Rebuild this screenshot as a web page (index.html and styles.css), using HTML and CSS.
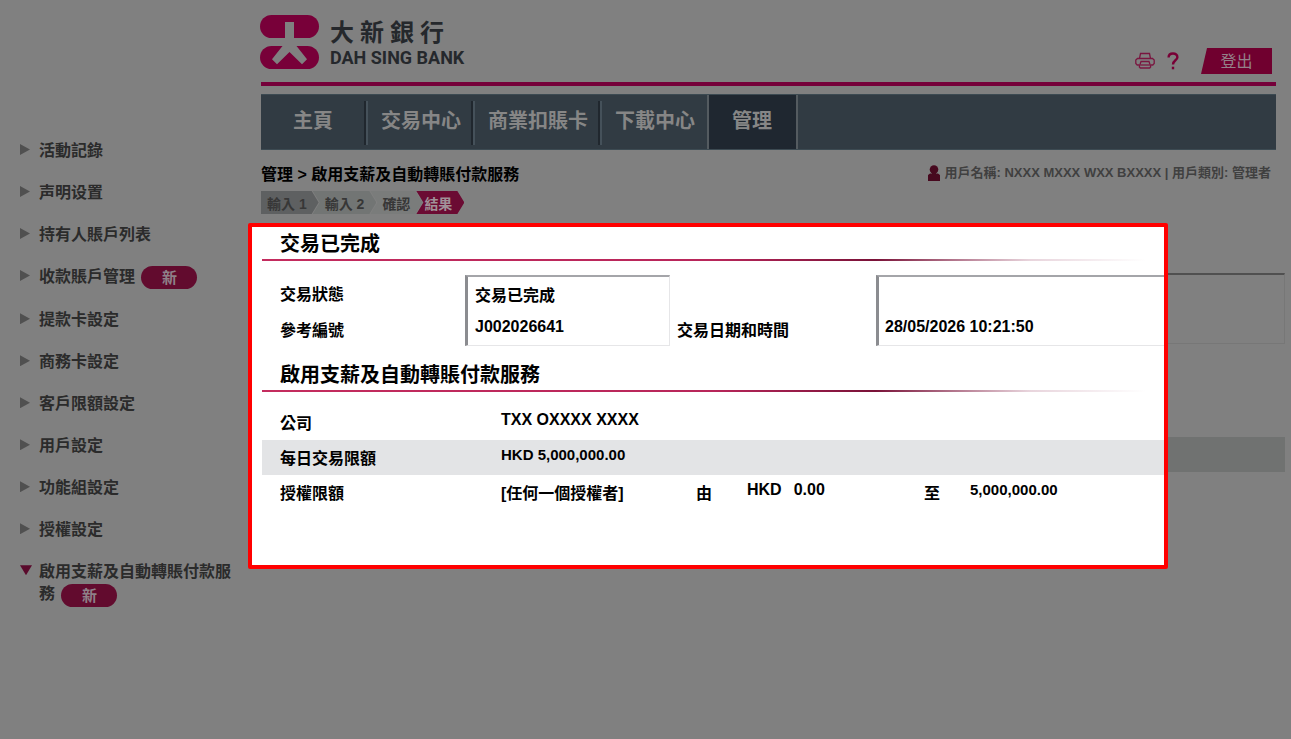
FILE: index.html
```html
<!DOCTYPE html>
<html lang="zh-Hant">
<head>
<meta charset="utf-8">
<meta name="viewport" content="width=device-width, initial-scale=1">
<title>大新銀行 DAH SING BANK</title>
<link rel="stylesheet" href="styles.css">
</head>
<body>
<div class="page">
  <aside class="sidebar">
    <ul class="side-list">
      <li class="side-item"><a href="#">活動記錄</a></li>
      <li class="side-item"><a href="#">声明设置</a></li>
      <li class="side-item"><a href="#">持有人賬戶列表</a></li>
      <li class="side-item"><a href="#">收款賬戶管理</a> <span class="pill">新</span></li>
      <li class="side-item"><a href="#">提款卡設定</a></li>
      <li class="side-item"><a href="#">商務卡設定</a></li>
      <li class="side-item"><a href="#">客戶限額設定</a></li>
      <li class="side-item"><a href="#">用戶設定</a></li>
      <li class="side-item"><a href="#">功能組設定</a></li>
      <li class="side-item"><a href="#">授權設定</a></li>
      <li class="side-item side-item-open"><a href="#">啟用支薪及自動轉賬付款服務</a> <span class="pill">新</span></li>
    </ul>
  </aside>

  <div class="main">
    <header class="header">
      <a class="brand" href="#">
        <svg class="brand-mark" width="60" height="55" viewBox="0 0 60 55" aria-hidden="true">
          <rect x="0" y="0" width="59" height="23" rx="11.5" fill="#780039"/>
          <rect x="0" y="31" width="59" height="23" rx="11.5" fill="#780039"/>
          <path d="M25 7h9v24h2.500l10.500 13.300-5 4.900-12.500-12.300-12.500 12.300-5-4.900L22.500 31H25z" fill="#808080"/>
        </svg>
        <span class="brand-names">
          <span class="brand-zh"><span>大</span><span>新</span><span>銀</span><span>行</span></span>
          <span class="brand-en">DAH SING BANK</span>
        </span>
      </a>
      <div class="tools">
        <button class="icon-button" type="button" aria-label="列印">
          <svg width="20" height="18" viewBox="0 0 20 18" fill="none" stroke="#7a1640" stroke-width="1.300" aria-hidden="true">
            <path d="M4.500 6.500 5.500 1.500h9l1 5"/>
            <path d="M4.500 13H2.200L.8 11.500V8l1.700-1.500h15L19.200 8v3.500L17.800 13h-2.300"/>
            <path d="M6 9.500h8l1.700 5.300-1 1.200H5.300l-1-1.200z"/>
            <path d="M5.500 13h9"/>
          </svg>
        </button>
        <button class="icon-button help" type="button" aria-label="說明">
          <svg width="12" height="18" viewBox="0 0 12 18" fill="none" stroke="#780036" stroke-width="2.400" aria-hidden="true">
            <path d="M1.600 5.500C1.600 2.800 3.400 1.500 6 1.500s4.400 1.400 4.400 3.700C10.400 8.300 6 8.400 6 12.500"/>
            <path d="M6 14.700v2.600"/>
          </svg>
        </button>
        <button class="logout" type="button">登出</button>
      </div>
    </header>

    <nav class="nav">
      <a class="nav-home" href="#">主頁</a>
      <a href="#">交易中心</a>
      <a href="#">商業扣賬卡</a>
      <a href="#">下載中心</a>
      <a class="nav-active" href="#">管理</a>
    </nav>

    <div class="context">
      <div class="crumbs">管理 &gt; 啟用支薪及自動轉賬付款服務</div>
      <div class="user">
        <svg width="14" height="16" viewBox="0 0 14 16" fill="#47091f" aria-hidden="true">
          <circle cx="7" cy="4.500" r="4.300"/>
          <path d="M5 7h4v1.500h2L13 10v6H1v-6l2-1.500h2z"/>
        </svg>
        <span>用戶名稱: NXXX MXXX WXX BXXXX | 用戶類別: 管理者</span>
      </div>
    </div>

    <ol class="steps">
      <li class="step step-one">輸入 1</li>
      <li class="step step-two">輸入 2</li>
      <li class="step step-three">確認</li>
      <li class="step step-current">結果</li>
    </ol>

    <div class="stage">
      <section class="panel">
        <h2 class="title">交易已完成</h2>
        <div class="status">
          <div class="status-labels"><span>交易狀態</span><span>參考編號</span></div>
          <div class="status-box"><span>交易已完成</span><span>J002026641</span></div>
          <div class="status-labels status-date"><span>交易日期和時間</span></div>
          <div class="status-box status-box-open"><span>28/05/2026 10:21:50</span></div>
        </div>
        <h2 class="title">啟用支薪及自動轉賬付款服務</h2>
        <table class="details">
          <tbody>
            <tr>
              <th class="col-label" scope="row">公司</th>
              <td class="col-value raised">TXX OXXXX XXXX</td>
              <td class="col-from"></td><td class="col-min"></td><td class="col-to"></td><td></td>
            </tr>
            <tr class="striped">
              <th scope="row">每日交易限額</th>
              <td class="raised amount" colspan="5">HKD 5,000,000.00</td>
            </tr>
            <tr>
              <th scope="row">授權限額</th>
              <td>[任何一個授權者]</td>
              <td>由</td>
              <td class="raised"><span class="currency">HKD</span>0.00</td>
              <td>至</td>
              <td class="raised amount">5,000,000.00</td>
            </tr>
          </tbody>
        </table>
      </section>
      <div class="backdrop">
        <div class="backdrop-box"></div>
        <div class="backdrop-stripe"></div>
      </div>
    </div>
  </div>
</div>
</body>
</html>
```
FILE: styles.css
```css
* { box-sizing: border-box; }

body {
  margin: 0;
  min-height: 100vh;
  background: #808080;
  color: #000;
  font: bold 16px/22px "Liberation Sans", "Noto Sans CJK TC", sans-serif;
}

a { color: inherit; text-decoration: none; }

button {
  padding: 0;
  border: 0;
  background: none;
  color: inherit;
  font: inherit;
  cursor: pointer;
}

.page { display: flex; }

/* Side menu */
.sidebar {
  flex: none;
  width: 248px;
  padding: 140px 8px 0 20px;
  color: #2b2b2b;
}

.side-list {
  display: flex;
  flex-direction: column;
  gap: 20px;
  margin: 0;
  padding: 0;
  list-style: none;
}

.side-item { padding-left: 19px; position: relative; }

.side-item::before {
  content: "";
  position: absolute;
  left: 0;
  top: 4px;
  width: 10px;
  height: 11px;
  background: #505050;
  clip-path: polygon(0 0, 100% 50%, 0 100%);
}

.side-item-open::before {
  width: 12px;
  height: 10px;
  background: #5a0a2c;
  clip-path: polygon(0 0, 100% 0, 50% 100%);
}

.pill {
  display: inline-block;
  width: 56px;
  margin-left: 2px;
  border-radius: 12px;
  background: #620b2e;
  color: #8e8088;
  font-size: 15px;
  line-height: 23px;
  text-align: center;
  vertical-align: middle;
}

/* Header */
.main { flex: 1; min-width: 0; }

.header {
  display: flex;
  justify-content: space-between;
  margin: 0 15px 0 13px;
  padding-top: 15px;
  border-bottom: 4px solid #75003a;
}

.brand { display: flex; gap: 10px; padding-bottom: 12px; margin-left: -1px; }

.brand-names { display: flex; flex-direction: column; color: #25282c; }

.brand-zh {
  display: flex;
  gap: 6px;
  font: bold 24px/32px "Noto Sans CJK TC", sans-serif;
}

.brand-en { font: bold 18px/22px Roboto, sans-serif; }

.tools {
  display: flex;
  align-items: center;
  gap: 12px;
  height: 26px;
  margin: 33px 4px 0 0;
}

.icon-button { display: flex; }

.logout {
  width: 71px;
  height: 26px;
  margin-left: 10px;
  background: #70002f;
  color: #948089;
  font-weight: normal;
  line-height: 28px;
  clip-path: polygon(6px 0, 100% 0, 100% 100%, 0 100%);
}

/* Main navigation */
.nav {
  display: flex;
  margin: 8px 15px 0 13px;
  border: 1px solid #3c4a52;
  border-width: 1px 0;
  background: #313b43;
  color: #868686;
  font-size: 20px;
  line-height: 53px;
}

.nav a { padding: 0 14px 1px 13px; background: linear-gradient(90deg, #20272e 50%, #45515a 50%) right 6px / 4px 44px no-repeat; }
.nav .nav-home { padding: 0 35px 0 32px; }
.nav a:nth-child(4) { padding-right: 12px; background: none; }

.nav .nav-active {
  padding: 0 24px 0 23px;
  border: 2px solid #545b60;
  border-width: 0 2px;
  background: #1f2730;
}

/* Breadcrumb and signed-in user */
.context {
  display: flex;
  justify-content: space-between;
  margin: 12px 20px 0 13px;
}

.crumbs { line-height: 26px; }

.user {
  display: flex;
  align-items: center;
  gap: 3px;
  height: 22px;
  color: #404040;
  font-size: 13px;
}

/* Progress steps */
.steps {
  display: flex;
  margin: 3px 0 9px 13px;
  padding: 0;
  list-style: none;
  color: #373737;
  font-size: 14px;
  line-height: 27px;
}

.step {
  height: 23px;
  padding: 0 12px 0 6px;
  clip-path: polygon(0 0, calc(100% - 7px) 0, 100% 50%, calc(100% - 7px) 100%, 0 100%, 7px 50%);
}

.step + .step { margin-left: -6px; padding-left: 12px; }
.step-one { background: #5e6061; clip-path: polygon(0 0, calc(100% - 7px) 0, 100% 50%, calc(100% - 7px) 100%, 0 100%); }
.step-two { background: #727574; }
.step-three { background: #7a7c7b; }
.steps .step-current { padding: 0 12px 0 8px; background: #6b0b33; color: #a09198; }

/* Highlighted result */
.stage { display: flex; margin-right: 6px; }

.panel {
  flex: 1;
  min-width: 0;
  padding: 0 0 55px 10px;
  border: 4px solid #f00;
  border-radius: 2px;
  background: #fff;
}

.title {
  margin: 0;
  padding: 3px 0 0 18px;
  font-size: 20px;
  line-height: 29px;
}

.title::after {
  content: "";
  display: block;
  height: 2px;
  margin-left: -18px;
  background: linear-gradient(90deg, #c42c5e 0, #b8265a 50%, #7a1238 68%, #e8d4dc 85%, #fff 98%);
}

.status {
  display: flex;
  align-items: stretch;
  margin: 14px 0 12px;
  height: 71px;
}

.status-labels {
  display: flex;
  flex-direction: column;
  gap: 14px;
  width: 203px;
  padding: 9px 0 0 18px;
}

.status-box {
  display: flex;
  flex-direction: column;
  gap: 9px;
  width: 205px;
  padding: 8px 0 0 7px;
  border: 1px solid #e6e6e8;
  border-top: 2px solid #a4a5a9;
  border-left: 3px solid #8b8c90;
}

.status-date { width: 206px; padding: 45px 0 0 7px; }
.status-box-open { flex: 1; padding: 39px 0 0 6px; border-right: 0; }

.details {
  width: 100%;
  margin-top: 13px;
  border-collapse: collapse;
  table-layout: fixed;
}

.details tr { height: 35px; }
.details th, .details td { padding: 8px 0 5px; text-align: left; vertical-align: top; }
.details th { padding-left: 18px; }
.details .raised { padding: 4px 0 9px; }
.details .amount { font-size: 15px; }
.col-label { width: 239px; }
.col-value { width: 195px; }
.col-from { width: 51px; }
.col-min { width: 177px; }
.col-to { width: 46px; }
.striped { background: #e3e4e6; }
.currency { margin-right: 12px; }

/* Page parts that continue behind the highlighted panel */
.backdrop { width: 117px; padding-top: 50px; }

.backdrop-box {
  height: 71px;
  border: 1px solid #777;
  border-top: 2px solid #505050;
  border-left: 0;
}

.backdrop-stripe { height: 35px; margin-top: 93px; background: #707271; }
```
